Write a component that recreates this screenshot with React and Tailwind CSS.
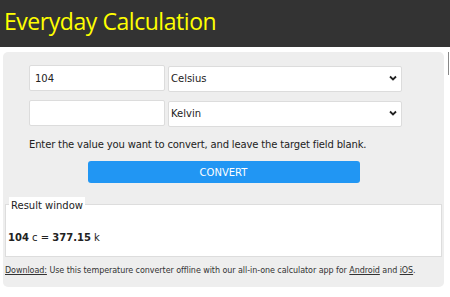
import React from 'react';

const Chevron = () => (
  <svg width="8" height="6" viewBox="0 0 8 6" className="pointer-events-none absolute right-[5px] top-[10px]">
    <path d="M1 1.5 L4 4.5 L7 1.5" fill="none" stroke="#222" strokeWidth="1.8" />
  </svg>
);

const UnitSelect = ({ value, options }) => (
  <div className="relative w-[234px] h-[26px]">
    <select
      defaultValue={value}
      className="appearance-none w-full h-full bg-white border border-[#dcdcdc] rounded-[2px] pl-[2px] text-[10px] text-[#222] outline-none"
    >
      {options.map((o) => (
        <option key={o}>{o}</option>
      ))}
    </select>
    <Chevron />
  </div>
);

const units = ['Celsius', 'Fahrenheit', 'Kelvin', 'Rankine'];

export default function App() {
  return (
    <div className="w-[450px] h-[297px] overflow-hidden bg-white" style={{ fontFamily: '"DejaVu Sans", Verdana, sans-serif' }}>
      <header className="h-[47px] bg-[#333333] pl-[4px] pt-[4px]">
        <h1 className="text-[23px] leading-[34px] text-[#ffff00] tracking-[-0.45px]" style={{ fontFamily: '"Open Sans", "Noto Sans", sans-serif' }}>
          Everyday Calculation
        </h1>
      </header>

      <div className="flex pt-[5px]">
        <main className="ml-[3px] w-[441px] h-[235px] bg-[#eeeeee] rounded-[5px] pt-[13px]">
          <div className="flex flex-col gap-[9px] pl-[26px]">
            <div className="flex gap-[3px]">
              <input
                defaultValue="104"
                className="w-[136px] h-[26px] bg-white border border-[#dcdcdc] rounded-[2px] pl-[5px] text-[10px] text-[#222] outline-none"
              />
              <UnitSelect value="Celsius" options={units} />
            </div>
            <div className="flex gap-[3px]">
              <input className="w-[136px] h-[26px] bg-white border border-[#dcdcdc] rounded-[2px] pl-[5px] text-[10px] text-[#222] outline-none" />
              <UnitSelect value="Kelvin" options={units} />
            </div>
          </div>

          <p className="pl-[26px] mt-[11px] text-[10px] leading-[16px] tracking-[-0.15px] text-[#222]">
            Enter the value you want to convert, and leave the target field blank.
          </p>

          <div className="flex justify-center mt-[8px]">
            <button className="w-[272px] h-[22px] bg-[#2196f3] rounded-[3px] text-white text-[10px]">
              CONVERT
            </button>
          </div>

          <fieldset className="ml-[2px] mt-[14px] w-[437px] h-[60px] bg-white border border-[#dddddd] pl-[2px]">
            <legend className="ml-[1px] px-[2px] pt-[3px] bg-white text-[10px] leading-[12px] text-[#222]">Result window</legend>
            <div className="mt-[18px] text-[10px] text-[#222]">
              <b>104</b> c = <b>377.15</b> k
            </div>
          </fieldset>

          <p className="ml-[2px] mt-[8px] text-[8px] leading-[12px] tracking-[-0.06px] text-[#333]">
            <a className="underline">Download:</a> Use this temperature converter offline with our all-in-one calculator app for{' '}
            <a className="underline">Android</a> and <a className="underline">iOS</a>.
          </p>
        </main>
        <div className="ml-auto mr-[1px] w-[1px] h-[23px] bg-[#888]" />
      </div>
    </div>
  );
}
